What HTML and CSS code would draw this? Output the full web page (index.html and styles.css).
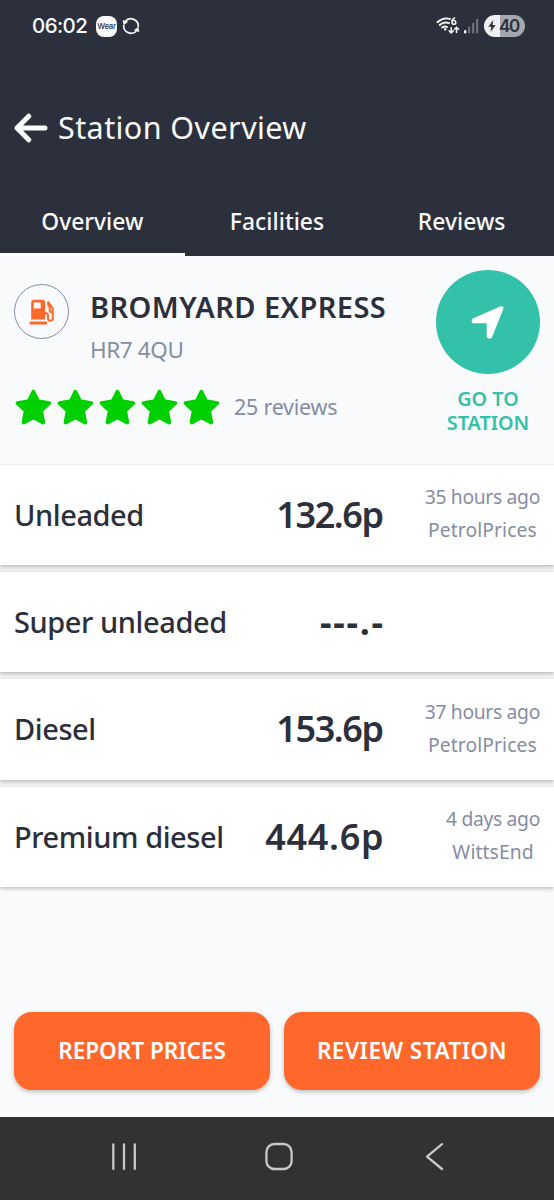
FILE: index.html
```html
<!DOCTYPE html>
<html lang="en">
<head>
<meta charset="utf-8">
<title>Station Overview</title>
<link rel="stylesheet" href="styles.css">
</head>
<body>
<div class="screen">
  <header class="header">
    <div class="status">
      <div class="status-left">
        <span class="clock">06:02</span>
        <span class="wear">Wear</span>
        <svg class="sync" width="18" height="18" viewBox="0 0 18 18" fill="none" stroke="#f2f3f5" stroke-width="1.7"><path d="M3.2 4.6A7.3 7.3 0 0 1 16.2 10M14.8 13.4A7.3 7.3 0 0 1 1.8 8"/><path d="M.6 3 6.2 4.8 1.6 8.2ZM17.4 15 11.8 13.2l4.6-3.4Z" fill="#f2f3f5" stroke="none"/></svg>
      </div>
      <div class="status-right">
        <svg width="24" height="20" viewBox="0 0 24 20" fill="none" stroke="#f2f3f5" stroke-width="1.9" stroke-linecap="round"><path d="M1.5 6.2Q7.5.8 14 3M3.8 9Q8 5.2 13 7.2M6.2 11.6Q8.5 9.8 11 11"/><circle cx="9.2" cy="13.2" r="1.2" fill="#f2f3f5" stroke="none"/><path d="M18.6 2Q16.2 2.8 16 5.8" stroke-width="1.5"/><circle cx="17.9" cy="6.4" r="1.9" stroke-width="1.5"/><path d="M15.2 11.5v5.2m-2-1.8 2 2 2-2M20.5 16.5v-5m-2 1.8 2-2 2 2" stroke-width="1.5"/></svg>
        <svg width="15" height="16" viewBox="0 0 15 16"><rect x="0" y="12" width="2.4" height="3.6" rx="1" fill="#f2f3f5"/><g fill="#6c707a"><rect x="4" y="8.5" width="2.3" height="7" rx="1"/><rect x="8" y="4.7" width="2.3" height="10.8" rx="1"/><rect x="12" y=".8" width="2.3" height="14.7" rx="1"/></g></svg>
        <div class="battery">
          <svg width="8" height="12" viewBox="0 0 8 12"><path d="M5.3 0 .3 6.8h3L2.5 12l5.2-7H4.6Z" fill="#2c303c"/></svg>
          <span>40</span>
        </div>
      </div>
    </div>
    <div class="title-bar">
      <svg width="34" height="30" viewBox="0 0 34 30" fill="none" stroke="#fafbfd" stroke-width="5" stroke-linecap="round" stroke-linejoin="round"><path d="M14.7 3.2 3 15l11.7 11.8M4 15h27"/></svg>
      <h1 class="title">Station Overview</h1>
    </div>
    <nav class="tabs">
      <a class="tab active"><span>Overview</span></a>
      <a class="tab"><span>Facilities</span></a>
      <a class="tab"><span>Reviews</span></a>
    </nav>
  </header>

  <section class="station">
    <div class="station-main">
      <div class="identity">
        <div class="pump">
          <svg width="26" height="26" viewBox="0 0 26 26"><path fill="#ff672b" fill-rule="evenodd" d="M2.2 20.5V3.2Q2.2.7 4.7.7h9Q16.2.7 16.2 3.2v17.3ZM4.7 3.4v6h7v-6Z"/><rect x=".7" y="22.5" width="17.3" height="3" rx=".7" fill="#ff672b"/><path d="M16 14q3 0 3 3v2.5q0 2 2 2.2 2.8 0 2.8-2.5V9.5L19.2 3v3l1.6 2.2v4.2q1 1.2 3 .8" fill="none" stroke="#ff672b" stroke-width="2" stroke-linejoin="round"/></svg>
        </div>
        <div class="names">
          <h2 class="name">BROMYARD EXPRESS</h2>
          <p class="postcode">HR7 4QU</p>
        </div>
      </div>
      <div class="rating">
        <svg width="206" height="38" viewBox="0 0 206 38" fill="#00d000" stroke="#00d000" stroke-width="4" stroke-linejoin="round"><defs><path id="star" d="M19.4 3.9 24 13.3l11.2 1.8-8.2 7.8 2.2 11.5-9.8-5.2-9.8 5.2 2.2-11.5-8.2-7.8 11.2-1.8Z"/></defs><use href="#star"/><use href="#star" x="42"/><use href="#star" x="84"/><use href="#star" x="126"/><use href="#star" x="168"/></svg>
        <span class="reviews">25 reviews</span>
      </div>
    </div>
    <div class="go">
      <div class="go-circle">
        <svg width="34" height="34" viewBox="0 0 34 34" fill="#fff" stroke="#fff" stroke-width="4" stroke-linejoin="round"><path d="M30.5 3 2.7 15.3v1H17.7V31.5h1.5Z"/></svg>
      </div>
      <div class="go-label"><span>GO TO</span><span>STATION</span></div>
    </div>
  </section>

  <main class="prices">
    <div class="row"><span class="fuel">Unleaded</span><span class="price narrow">132.6p</span><div class="meta"><span>35 hours ago</span><span class="source">PetrolPrices</span></div></div>
    <div class="row"><span class="fuel">Super unleaded</span><span class="price none">---.-</span><div class="meta"></div></div>
    <div class="row"><span class="fuel">Diesel</span><span class="price narrow">153.6p</span><div class="meta"><span>37 hours ago</span><span class="source">PetrolPrices</span></div></div>
    <div class="row"><span class="fuel">Premium diesel</span><span class="price wide">444.6p</span><div class="meta"><span>4 days ago</span><span class="source">WittsEnd</span></div></div>
  </main>

  <div class="actions">
    <button class="btn report">REPORT PRICES</button>
    <button class="btn review">REVIEW STATION</button>
  </div>

  <footer class="navbar">
    <svg width="554" height="83" viewBox="0 0 554 83" fill="none" stroke="#c9c9c9" stroke-width="2.3" stroke-linecap="round" stroke-linejoin="round"><path d="M113.3 27.5v24.4M124 27.5v24.4M134.8 27.5v24.4"/><rect x="266.4" y="27" width="25.2" height="25" rx="8"/><path d="m442 27.2-15 12.4 15 12.4"/></svg>
  </footer>
</div>
</body>
</html>
```
FILE: styles.css
```css
* { box-sizing: border-box; }
body { margin: 0; background: #f9fafc; font-family: "Noto Sans", "Open Sans", sans-serif; color: #2c303c; }
h1, h2, p { margin: 0; }
svg { display: block; flex: none; }
.screen { width: 554px; height: 1200px; display: flex; flex-direction: column; overflow: hidden; }

.header { height: 256px; background: #2c303c; color: #fafbfd; display: flex; flex-direction: column; flex: none; }
.status { height: 52px; padding: 0 29px 0 32px; display: flex; align-items: center; justify-content: space-between; }
.status-left, .status-right { display: flex; align-items: center; }
.clock { font: 500 20.5px/24px Inter, Roboto, sans-serif; width: 64px; white-space: nowrap; letter-spacing: -.6px; }
.wear { width: 21px; height: 21px; border-radius: 8px; background: #fafbfd; color: #2c303c; font: 500 7.8px/21px Inter, sans-serif; text-align: center; letter-spacing: -.3px; }
.sync { margin-left: 5px; }
.status-right > svg + svg { margin-left: 4px; }
.battery { width: 41px; height: 22px; margin-left: 5px; padding-left: 4px; display: flex; align-items: center; gap: 3px; border-radius: 11px; background: linear-gradient(90deg, #f0f0f3 16px, #a6a8af 16px); color: #2c303c; font: 600 17px/22px Inter, sans-serif; letter-spacing: -1.2px; }

.title-bar { height: 152px; padding: 0 0 0 14px; display: flex; align-items: center; gap: 10px; flex: none; }
.title { font-size: 30.5px; line-height: 40px; padding-bottom: 2px; font-weight: 450; letter-spacing: .42px; white-space: nowrap; }
.tabs { display: grid; grid-template-columns: repeat(3, 1fr); height: 70px; margin-top: -18px; flex: none; }
.tab { display: flex; justify-content: center; padding-top: 19.5px; font-size: 22.8px; line-height: 32px; font-weight: 480; letter-spacing: .05px; border-bottom: 3.5px solid transparent; }
.active { border-color: #fff; }

.station { height: 208.5px; flex: none; display: flex; justify-content: space-between; padding: 14px 14px 0; }
.identity { display: flex; gap: 21px; height: 113px; padding-top: 14px; }
.pump { width: 55px; height: 55px; border: 1.5px solid #858da3; border-radius: 50%; display: flex; align-items: center; justify-content: center; }
.name { font-size: 29px; line-height: 38px; margin-top: 4px; font-weight: 600; letter-spacing: .42px; white-space: nowrap; }
.postcode { font-size: 22.5px; line-height: 32px; margin-top: 8px; font-weight: 380; letter-spacing: -.4px; color: #858da3; }
.rating { display: flex; align-items: center; gap: 14px; height: 48px; }
.reviews { font-size: 21.5px; padding-bottom: 2px; color: #858da3; font-weight: 390; letter-spacing: -.25px; white-space: nowrap; }
.go { width: 104px; }
.go-circle { width: 104px; height: 104px; border-radius: 50%; background: #34c1aa; display: flex; align-items: center; justify-content: center; }
.go-label { margin-top: 12.5px; display: flex; flex-direction: column; align-items: center; font-size: 19.8px; line-height: 24.5px; font-weight: 600; color: #34c1aa; }

.prices { flex: none; display: flex; flex-direction: column; gap: 7px; background: #f3f4f6; }
.row { height: 100.4px; background: #fff; padding: 0 14px; display: grid; grid-template-columns: 230px 139px 157px; align-items: center; box-shadow: 0 2px 4px rgba(0,0,0,.22), 0 0 1px rgba(0,0,0,.12); }
.fuel { font-size: 29px; line-height: 40px; white-space: nowrap; font-weight: 470; letter-spacing: -.42px; }
.price { font-size: 36px; line-height: 44px; font-weight: 650; text-align: right; white-space: nowrap; }
.narrow { letter-spacing: -1.4px; margin-right: .3px; }
.wide { letter-spacing: .7px; margin-right: -1.2px; }
.none { letter-spacing: 1.7px; margin-right: -1.7px; font-weight: 750; }
.meta { justify-self: end; padding-bottom: 3px; display: flex; flex-direction: column; align-items: center; font-size: 19.3px; line-height: 33px; letter-spacing: -.32px; color: #858da3; white-space: nowrap; }
.source { letter-spacing: .1px; }

.actions { display: grid; grid-template-columns: 256px 256px; gap: 14px; padding: 0 14px; margin-top: 124.5px; flex: none; }
.btn { height: 78px; border: 0; border-radius: 18px; padding: 0; background: #ff672b; color: #fff; font: 600 22.5px/32px "Noto Sans", sans-serif; box-shadow: 0 2px 4px rgba(0,0,0,.25); white-space: nowrap; }
.review { letter-spacing: .5px; }
.navbar { margin-top: auto; height: 83px; background: #323232; flex: none; }
```
